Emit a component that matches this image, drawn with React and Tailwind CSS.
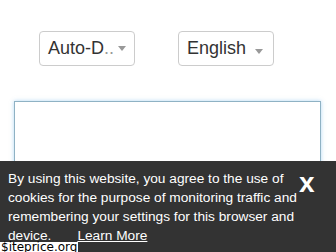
import React from "react";

function Caret() {
  return <span className="ml-1 inline-block h-0 w-0 border-x-[4px] border-t-[5px] border-x-transparent border-t-[#999]" />;
}

export default function App() {
  return (
    <div className="relative h-[252px] w-[336px] overflow-hidden bg-white font-['Liberation_Sans',Arial,sans-serif]">
      {/* language pickers */}
      <div className="flex gap-[43px] pl-[39px] pt-[31px]">
        <div className="flex h-[35px] w-[96px] items-center rounded-[4px] border border-[#ccc] pl-[8px] text-[18px] text-[#333]">
          <span>Auto-D</span>
          <span className="text-[#999]">..</span>
          <Caret />
        </div>
        <div className="flex h-[35px] w-[96px] items-center rounded-[4px] border border-[#ccc] pl-[8px] text-[18px] text-[#333]">
          <span>English</span>
          <span className="ml-[5px]"><Caret /></span>
        </div>
      </div>

      {/* text box */}
      <div className="ml-[14px] mt-[35px] h-[140px] w-[307px] border border-[#8fb2c4] shadow-[0_0_4px_rgba(102,175,233,0.5)]" />

      {/* cookie banner */}
      <div className="absolute left-0 top-[161px] flex h-[91px] w-full bg-[#333] pl-[8px] pt-[8px] text-white">
        <p className="w-[291px] shrink-0 whitespace-nowrap text-[13.7px] leading-[19px]">
          By using this website, you agree to the use of<br />
          cookies for the purpose of monitoring traffic and<br />
          remembering your settings for this browser and<br />
          device.
          <a className="ml-[26px] underline">Learn More</a>
        </p>
        <span className="mt-[-6px] text-[28px] font-bold leading-[40px]">x</span>
      </div>

      <div className="absolute bottom-0 left-0 bg-white px-[1px] font-['DejaVu_Sans',sans-serif] text-[12px] leading-[10px] text-black">
        $iteprice.org
      </div>
    </div>
  );
}
